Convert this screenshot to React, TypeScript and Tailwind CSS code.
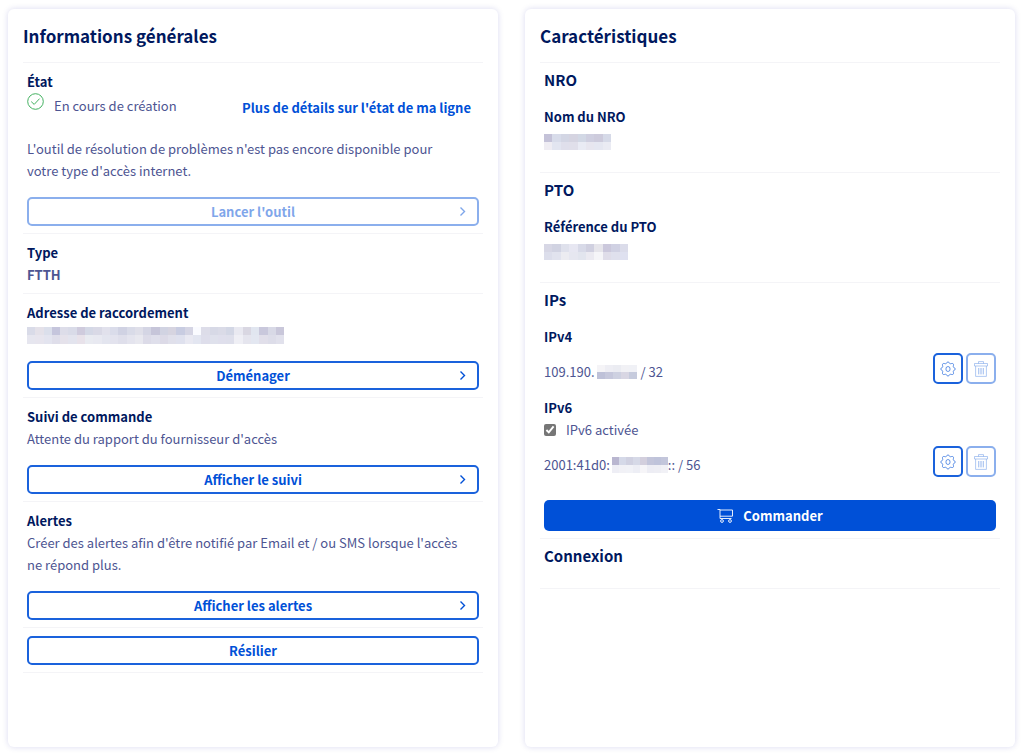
import type { ReactNode } from 'react';

const ADDRESS = [
  ['#d9dbe8', '#e4e1e9', '#dbdfeb', '#c5c5dc', '#dddde9', '#d9dbe8', '#cfcbdd', '#d4d8e6', '#d9d9e6', '#e1e1ec', '#dadcea', '#d0d2e3', '#d9dbe8', '#dfdfe9', '#d4d5e4', '#c6c5d9', '#d1d3e2', '#d6d4e0', '#c8cce1', '#d5d5e4', '#fafbff', '#dddde9', '#d7d9e6', '#dadbe7', '#d3d7e5', '#e9e9f1', '#d9d7e2', '#e1e6f0', '#c9c8dc', '#d8d9e6', '#c9c7da'],
  ['#e6e6ef', '#e7e5ee', '#e3e4ef', '#dfdeea', '#e5e2eb', '#e3e4ee', '#e8e2ea', '#e9ebf1', '#e8e9f1', '#e3e5ef', '#e3e3ee', '#dfdfeb', '#e4e4ee', '#e8e8ef', '#dcdbe8', '#dfdfeb', '#dcdae7', '#e0e0eb', '#dfe1ee', '#e9e9f2', '#e3e6f1', '#dedeeb', '#dfe1ec', '#dfdfec', '#dedfeb', '#efeff5', '#e5e5ee', '#e3e7f1', '#e1dfea', '#dddde9', '#e1e1ec'],
];
const NRO = [
  ['#c4c2d8', '#d8dcea', '#d3d6e4', '#d5d4e1', '#d2d8e5', '#cfcfe0', '#cdcbdc', '#d6dae8'],
  ['#efedf3', '#e2e5f0', '#dfdfeb', '#e0dfea', '#e9ebf4', '#e7e6ef', '#e5e7f1', '#eaebf3'],
];
const PTO = [
  ['#d7d7e5', '#d1d3e2', '#dfe1ec', '#e7e7f2', '#d8dae8', '#d0d0e0', '#e6e5eb', '#cbc8dc', '#d0d1e3', '#dbdcea'],
  ['#dcdeeb', '#e1e3ee', '#ececf1', '#e6e7f0', '#e2e5ee', '#ebeaf1', '#f5f5f8', '#dfdde9', '#dfe0ed', '#dfe1f0'],
];
const IPV4 = [
  ['#f5f4f7', '#eeeef4', '#ebecf2', '#f1f1f5', '#f0f1f6'],
  ['#bec1d8', '#c6c8dc', '#ced1e1', '#d8d6e3', '#c6cbdd'],
];
const IPV6 = [
  ['#b9b6d0', '#d5d9e8', '#d0d1e1', '#d6d9e7', '#d3cfdd', '#c3c5da', '#bfc3da', '#c3c6db'],
  ['#eeeef5', '#f1f1f6', '#f1f2f7', '#edeef5', '#f6f5f8', '#ededf4', '#eeeef4', '#f1f1f6'],
];

function Redacted({ rows, className }: { rows: string[][]; className: string }) {
  return (
    <span aria-hidden="true" className={`flex flex-col ${className}`}>
      {rows.map((row, i) => (
        <span key={i} className="flex flex-1">
          {row.map((color, j) => (
            <span key={j} className="flex-1" style={{ backgroundColor: color }} />
          ))}
        </span>
      ))}
    </span>
  );
}

function Card({ title, children }: { title: string; children: ReactNode }) {
  return (
    <section className="rounded-md bg-white px-[15px] shadow-[0_0_6px_rgba(0,14,156,0.15)]">
      <h2 className="border-b border-[#f4f4f7] pt-[15px] pb-[14px] text-[17px] leading-6 font-bold text-[#00185e]">{title}</h2>
      {children}
    </section>
  );
}

function Tile({ children }: { children: ReactNode }) {
  return <div className="border-b border-[#f4f4f7] px-1 pt-2 pb-[7px]">{children}</div>;
}

function Chevron() {
  return (
    <svg aria-hidden="true" className="absolute top-2 right-2.5 size-[9px]" viewBox="0 0 9 9" fill="none" stroke="currentColor" strokeWidth="1.4">
      <path d="M2.5 0.5 L6.5 4.5 L2.5 8.5" />
    </svg>
  );
}

function OutlineButton({ children, chevron = true, disabled = false }: { children: ReactNode; chevron?: boolean; disabled?: boolean }) {
  return (
    <button
      type="button"
      disabled={disabled}
      className="relative flex h-[29px] w-full items-center justify-center rounded-[5px] border-2 border-[#1a62dc] text-[13px] leading-5 font-bold text-[#0050d7] disabled:opacity-50"
    >
      {children}
      {chevron && <Chevron />}
    </button>
  );
}

function GearIcon() {
  return (
    <svg aria-hidden="true" className="size-4" viewBox="0 0 16 16" fill="none" stroke="currentColor" strokeWidth="0.6">
      <path d="M6.4 2.4 Q7 0.9 8 0.9 Q9 0.9 9.6 2.4 Q10.3 3 11.2 2.6 Q12.6 2.2 13.2 2.8 Q13.8 3.4 13.4 4.8 Q13 5.7 13.6 6.4 Q15.3 7 15.3 8 Q15.3 9 13.6 9.6 Q13 10.3 13.4 11.2 Q13.8 12.6 13.2 13.2 Q12.6 13.8 11.2 13.4 Q10.3 13 9.6 13.6 Q9 15.1 8 15.1 Q7 15.1 6.4 13.6 Q5.7 13 4.8 13.4 Q3.4 13.8 2.8 13.2 Q2.2 12.6 2.6 11.2 Q3 10.3 2.4 9.6 Q0.7 9 0.7 8 Q0.7 7 2.4 6.4 Q3 5.7 2.6 4.8 Q2.2 3.4 2.8 2.8 Q3.4 2.2 4.8 2.6 Q5.7 3 6.4 2.4 Z" />
      <ellipse cx="8" cy="8" rx="2.1" ry="2.5" />
    </svg>
  );
}

function TrashIcon() {
  return (
    <svg aria-hidden="true" className="size-4" viewBox="0 0 16 16" fill="none" stroke="currentColor" strokeWidth="0.6">
      <path d="M1.5 2.5 H14.5 V5 H1.5 Z M5.5 2.5 V0.6 H10.5 V2.5 M2.6 5 V15.4 H13.4 V5 M5.5 7 V13.4 M7.2 7 V13.4 M8.8 7 V13.4 M10.5 7 V13.4" />
    </svg>
  );
}

function CartIcon() {
  return (
    <svg aria-hidden="true" className="size-4" viewBox="0 0 16 16" fill="none" stroke="currentColor" strokeWidth="0.9">
      <path d="M0.5 1.5 H3 V10.5 H14.5 M3 2 H15.5 V8.2 H3" />
      <circle cx="5" cy="13" r="1.4" />
      <circle cx="13" cy="13" r="1.4" />
    </svg>
  );
}

function IpActions({ version }: { version: string }) {
  return (
    <div className="flex gap-[3px]">
      <button type="button" aria-label={`Configurer ${version}`} className="flex h-[31px] w-[30px] items-center justify-center rounded-[5px] border-2 border-[#1a62dc] text-[#0050d7]">
        <GearIcon />
      </button>
      <button type="button" disabled aria-label={`Supprimer ${version}`} className="flex h-[31px] w-[30px] items-center justify-center rounded-[5px] border-2 border-[#1a62dc] text-[#0050d7] opacity-50">
        <TrashIcon />
      </button>
    </div>
  );
}

function Label({ children }: { children: ReactNode }) {
  return <h3 className="font-bold text-[#00185e]">{children}</h3>;
}

function Group({ title, children }: { title: string; children?: ReactNode }) {
  return (
    <div className="border-b border-[#f4f4f7] px-1 pt-1.5">
      <h3 className="text-[15px] leading-[22px] font-bold text-[#00185e]">{title}</h3>
      {children}
    </div>
  );
}

export default function App() {
  return (
    <main className="grid min-h-screen grid-cols-2 gap-[27px] bg-white pt-[9px] pr-[9px] pb-[7px] pl-2 font-['Noto_Sans_CJK_SC','Noto_Sans_CJK_JP','Noto_Sans',sans-serif] text-[13px] leading-[22px] text-[#4d5592]">
      <Card title="Informations générales">
        <Tile>
          <Label>État</Label>
          <div className="flex h-[45px] items-start justify-between pr-2">
            <div className="flex gap-2.5">
              <svg aria-hidden="true" className="size-[17px]" viewBox="0 0 17 17" fill="none" stroke="#2fa84f" strokeWidth="0.9">
                <circle cx="8.5" cy="8.5" r="7.8" />
                <path d="M4.2 8.6 L7.2 11.4 L12.6 5.6" />
              </svg>
              <span className="pt-0.5">En cours de création</span>
            </div>
            <a href="#etat" className="pt-1 font-bold text-[#0050d7]">Plus de détails sur l'état de ma ligne</a>
          </div>
          <p className="mb-[15px] pr-4">L'outil de résolution de problèmes n'est pas encore disponible pour votre type d'accès internet.</p>
          <OutlineButton disabled>Lancer l'outil</OutlineButton>
        </Tile>
        <Tile>
          <Label>Type</Label>
          <p className="font-bold">FTTH</p>
        </Tile>
        <Tile>
          <Label>Adresse de raccordement</Label>
          <div className="mb-[15px] flex h-[22px] items-center">
            <Redacted rows={ADDRESS} className="h-[17px] w-[257px]" />
          </div>
          <OutlineButton>Déménager</OutlineButton>
        </Tile>
        <Tile>
          <Label>Suivi de commande</Label>
          <p className="mb-[15px] pr-4">Attente du rapport du fournisseur d'accès</p>
          <OutlineButton>Afficher le suivi</OutlineButton>
        </Tile>
        <Tile>
          <Label>Alertes</Label>
          <p className="mb-[15px] pr-4">Créer des alertes afin d'être notifié par Email et / ou SMS lorsque l'accès ne répond plus.</p>
          <OutlineButton>Afficher les alertes</OutlineButton>
        </Tile>
        <Tile>
          <OutlineButton chevron={false}>Résilier</OutlineButton>
        </Tile>
      </Card>

      <Card title="Caractéristiques">
        <Group title="NRO">
          <div className="pt-[15px] pb-[22px]">
            <Label>Nom du NRO</Label>
            <div className="flex h-[22px] items-end">
              <Redacted rows={NRO} className="h-4 w-[67px]" />
            </div>
          </div>
        </Group>
        <Group title="PTO">
          <div className="pt-[15px] pb-[22px]">
            <Label>Référence du PTO</Label>
            <div className="flex h-[22px] items-end">
              <Redacted rows={PTO} className="h-4 w-[84px]" />
            </div>
          </div>
        </Group>
        <Group title="IPs">
          <div className="pt-[15px] pb-[7px]">
            <Label>IPv4</Label>
            <div className="mt-[5px] mb-[13px] flex items-start justify-between">
              <div className="flex items-center pt-2">
                109.190.
                <Redacted rows={IPV4} className="mr-1 ml-0.5 h-3.5 w-10" />
                / 32
              </div>
              <IpActions version="IPv4" />
            </div>
            <Label>IPv6</Label>
            <label className="flex items-center gap-2.5">
              <input type="checkbox" defaultChecked className="size-3 accent-[#767676]" />
              IPv6 activée
            </label>
            <div className="mt-[5px] mb-[23px] flex items-start justify-between">
              <div className="flex items-center pt-2">
                2001:41d0:
                <Redacted rows={IPV6} className="ml-0.5 h-4 w-14" />
                :: / 56
              </div>
              <IpActions version="IPv6" />
            </div>
            <button type="button" className="flex h-[31px] w-full items-center justify-center gap-2.5 rounded-[5px] bg-[#0050d7] font-bold text-white">
              <CartIcon />
              Commander
            </button>
          </div>
        </Group>
        <Group title="Connexion">
          <div className="h-[21px]" />
        </Group>
      </Card>
    </main>
  );
}
